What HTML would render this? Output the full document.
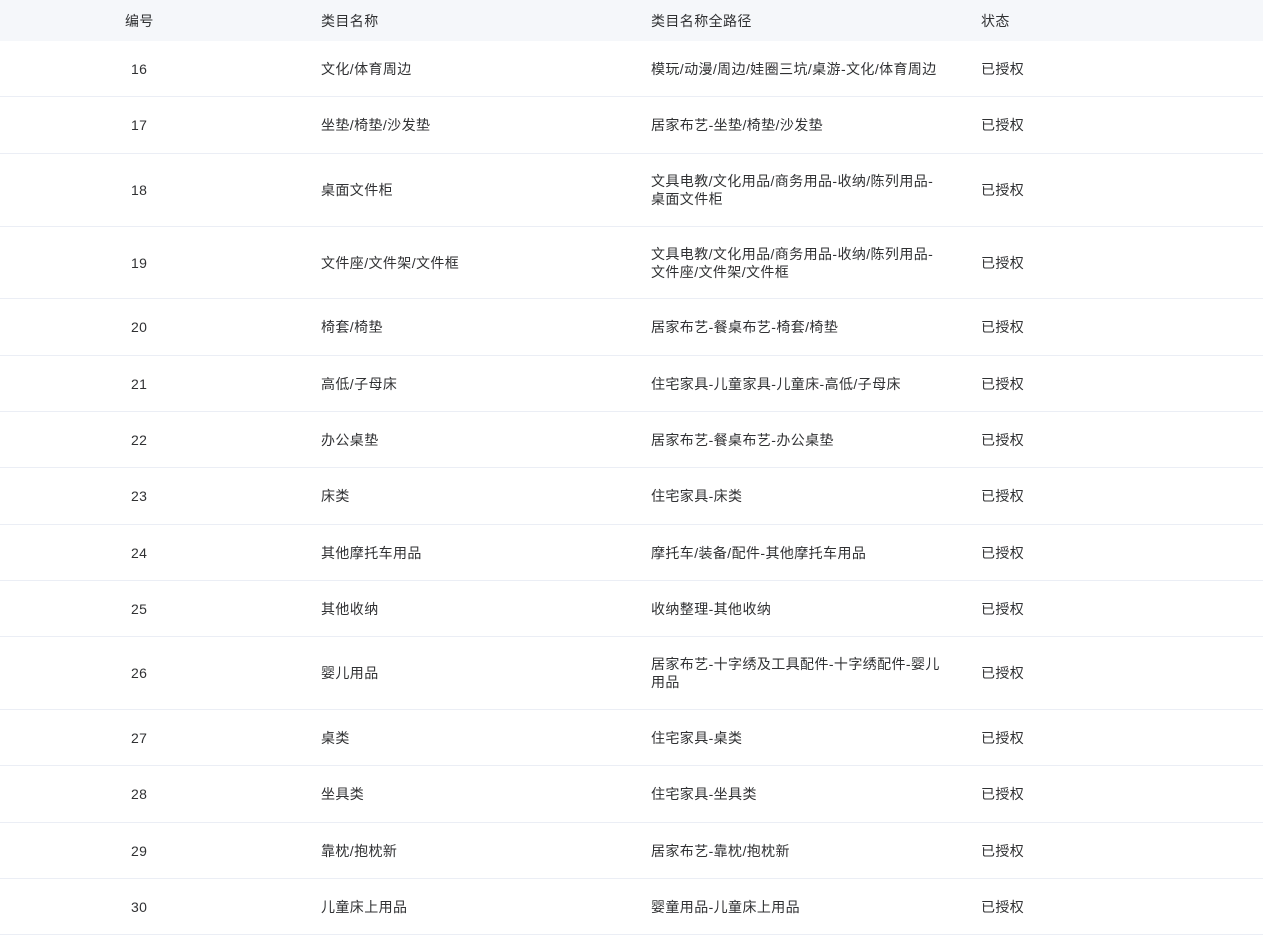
<!DOCTYPE html>
<html><head><meta charset="utf-8"><style>
*{margin:0;padding:0;box-sizing:border-box}
body{width:1263px;height:908px;overflow:hidden;background:#fff;font-family:"Liberation Sans","Noto Sans CJK SC",sans-serif;font-size:14px;letter-spacing:0.4px;color:#303133}
.r{position:absolute;left:0;width:1263px;border-bottom:1px solid #ebeef5;display:flex;align-items:center}
.h{background:#f5f7fa;border-bottom:none;color:#303133}
.c{position:absolute;line-height:18px}
.a{left:131px}.b{left:321px}.p{left:651px;width:296px}.s{left:981px}
.h .a{left:125px}
</style></head><body>
<div class="r h" style="top:0;height:41px"><span class="c a">编号</span><span class="c b">类目名称</span><span class="c p">类目名称全路径</span><span class="c s">状态</span></div>
<div class="r" style="top:41px;height:56px"><span class="c a">16</span><span class="c b">文化/体育周边</span><span class="c p">模玩/动漫/周边/娃圈三坑/桌游-文化/体育周边</span><span class="c s">已授权</span></div>
<div class="r" style="top:97px;height:57px"><span class="c a">17</span><span class="c b">坐垫/椅垫/沙发垫</span><span class="c p">居家布艺-坐垫/椅垫/沙发垫</span><span class="c s">已授权</span></div>
<div class="r" style="top:154px;height:73px"><span class="c a">18</span><span class="c b">桌面文件柜</span><span class="c p">文具电教/文化用品/商务用品-收纳/陈列用品-<br>桌面文件柜</span><span class="c s">已授权</span></div>
<div class="r" style="top:227px;height:72px"><span class="c a">19</span><span class="c b">文件座/文件架/文件框</span><span class="c p">文具电教/文化用品/商务用品-收纳/陈列用品-<br>文件座/文件架/文件框</span><span class="c s">已授权</span></div>
<div class="r" style="top:299px;height:57px"><span class="c a">20</span><span class="c b">椅套/椅垫</span><span class="c p">居家布艺-餐桌布艺-椅套/椅垫</span><span class="c s">已授权</span></div>
<div class="r" style="top:356px;height:56px"><span class="c a">21</span><span class="c b">高低/子母床</span><span class="c p">住宅家具-儿童家具-儿童床-高低/子母床</span><span class="c s">已授权</span></div>
<div class="r" style="top:412px;height:56px"><span class="c a">22</span><span class="c b">办公桌垫</span><span class="c p">居家布艺-餐桌布艺-办公桌垫</span><span class="c s">已授权</span></div>
<div class="r" style="top:468px;height:57px"><span class="c a">23</span><span class="c b">床类</span><span class="c p">住宅家具-床类</span><span class="c s">已授权</span></div>
<div class="r" style="top:525px;height:56px"><span class="c a">24</span><span class="c b">其他摩托车用品</span><span class="c p">摩托车/装备/配件-其他摩托车用品</span><span class="c s">已授权</span></div>
<div class="r" style="top:581px;height:56px"><span class="c a">25</span><span class="c b">其他收纳</span><span class="c p">收纳整理-其他收纳</span><span class="c s">已授权</span></div>
<div class="r" style="top:637px;height:73px"><span class="c a">26</span><span class="c b">婴儿用品</span><span class="c p">居家布艺-十字绣及工具配件-十字绣配件-婴儿<br>用品</span><span class="c s">已授权</span></div>
<div class="r" style="top:710px;height:56px"><span class="c a">27</span><span class="c b">桌类</span><span class="c p">住宅家具-桌类</span><span class="c s">已授权</span></div>
<div class="r" style="top:766px;height:57px"><span class="c a">28</span><span class="c b">坐具类</span><span class="c p">住宅家具-坐具类</span><span class="c s">已授权</span></div>
<div class="r" style="top:823px;height:56px"><span class="c a">29</span><span class="c b">靠枕/抱枕新</span><span class="c p">居家布艺-靠枕/抱枕新</span><span class="c s">已授权</span></div>
<div class="r" style="top:879px;height:56px"><span class="c a">30</span><span class="c b">儿童床上用品</span><span class="c p">婴童用品-儿童床上用品</span><span class="c s">已授权</span></div>
</body></html>
